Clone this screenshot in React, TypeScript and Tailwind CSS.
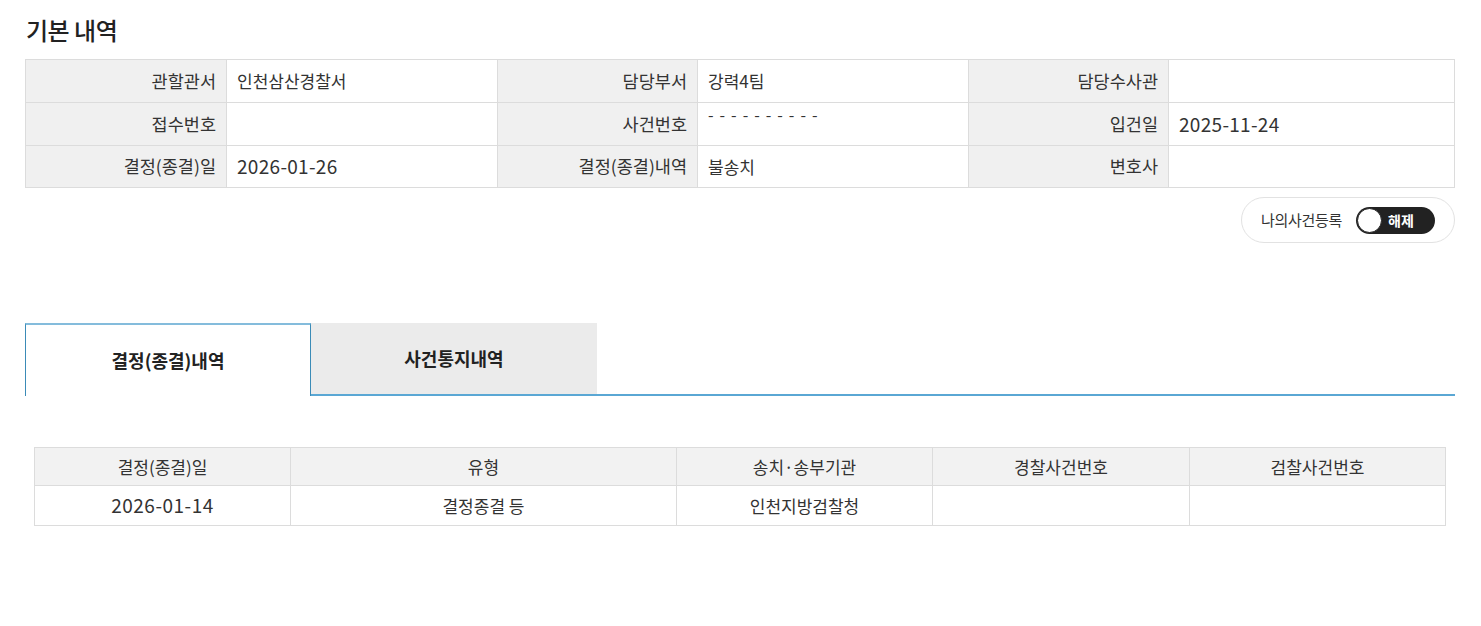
import { useState } from "react";

const font = { fontFamily: '"Noto Sans CJK KR", "Noto Sans", sans-serif' };

const basicRows = [
  [
    { label: "관할관서", value: "인천삼산경찰서" },
    { label: "담당부서", value: "강력4팀" },
    { label: "담당수사관", value: "" },
  ],
  [
    { label: "접수번호", value: "" },
    { label: "사건번호", value: "masked" },
    { label: "입건일", value: "2025-11-24" },
  ],
  [
    { label: "결정(종결)일", value: "2026-01-26" },
    { label: "결정(종결)내역", value: "불송치" },
    { label: "변호사", value: "" },
  ],
];

const decisionCols = ["결정(종결)일", "유형", "송치·송부기관", "경찰사건번호", "검찰사건번호"];
const decisionRows = [["2026-01-14", "결정종결 등", "인천지방검찰청", "", ""]];

// dates render a bit larger so digits are as wide as in the original font
const isDate = (v: string) => /^\d{4}-\d{2}-\d{2}$/.test(v);

const App = () => {
  const [tab, setTab] = useState(0);
  const [registered, setRegistered] = useState(true);

  return (
    <div className="min-h-screen bg-white text-[#222]" style={font}>
      <div className="px-[25px] pt-[13px] pr-[26px]">
        <h2 className="text-[24px] font-medium leading-[34px] tracking-[-0.5px] mb-[12px] ml-[1px]">기본 내역</h2>

        {/* 기본 내역 table */}
        <div className="border-t border-l border-[#dcdcdc]">
          {basicRows.map((row, i) => (
            <div key={i} className={`grid grid-cols-[201px_271px_200px_271px_200px_1fr] ${i === 2 ? "h-[42px]" : "h-[43px]"}`}>
              {row.map((cell) => (
                <>
                  <div
                    key={cell.label + "l"}
                    className="bg-[#f0f0f0] border-r border-b border-[#dcdcdc] flex items-center justify-end pr-[10px] text-[17.5px] text-[#333]"
                  >
                    {cell.label}
                  </div>
                  <div
                    key={cell.label + "v"}
                    className={`border-r border-b border-[#dcdcdc] flex items-center pl-[10px] text-[#333] ${
                      isDate(cell.value) ? "text-[19px] tracking-[0.3px]" : "text-[17px]"
                    }`}
                  >
                    {cell.value === "masked" ? (
                      <span className="self-start pt-[1px] text-[16px] tracking-[6px] leading-[20px]">----------</span>
                    ) : (
                      cell.value
                    )}
                  </div>
                </>
              ))}
            </div>
          ))}
        </div>

        {/* 나의사건등록 */}
        <div className="flex justify-end mt-[9px]">
          <div className="flex items-center gap-[14px] h-[46px] pl-[19px] pr-[19px] border border-[#e2e2e2] rounded-full">
            <span className="text-[15px] text-[#333] tracking-[-0.3px]">나의사건등록</span>
            <button
              onClick={() => setRegistered(!registered)}
              className="relative w-[79px] h-[27px] rounded-full bg-[#222] flex items-center"
            >
              <span className="absolute left-[1px] top-[1px] w-[25px] h-[25px] rounded-full bg-white border border-[#222]" />
              <span className="ml-[32px] text-white text-[14px] font-bold">{registered ? "해제" : "등록"}</span>
            </button>
          </div>
        </div>

        {/* tabs */}
        <div className="flex mt-[80px] h-[73px]">
          {["결정(종결)내역", "사건통지내역"].map((t, i) =>
            i === tab ? (
              <button
                key={t}
                onClick={() => setTab(i)}
                className="w-[286px] bg-white border-t-2 border-t-[#84bcdc] border-l border-r border-[#3b8bb7] flex items-center justify-center text-[18px] font-bold text-[#222]"
              >
                {t}
              </button>
            ) : (
              <button
                key={t}
                onClick={() => setTab(i)}
                className="w-[286px] bg-[#ebebeb] border-b-2 border-[#5aa7d4] flex items-center justify-center text-[18px] font-bold text-[#222]"
              >
                {t}
              </button>
            )
          )}
          <div className="flex-1 border-b-2 border-[#5aa7d4]" />
        </div>

        {/* decision table */}
        <div className="mt-[51px] mx-[9px] border-t border-l border-[#dcdcdc]">
          <div className="grid grid-cols-[256px_386px_256px_257px_1fr] h-[38px] bg-[#f2f2f2]">
            {decisionCols.map((c) => (
              <div key={c} className="border-r border-b border-[#dcdcdc] flex items-center justify-center text-[17px] text-[#333]">
                {c}
              </div>
            ))}
          </div>
          {decisionRows.map((r, i) => (
            <div key={i} className="grid grid-cols-[256px_386px_256px_257px_1fr] h-[40px]">
              {r.map((v, j) => (
                <div
                  key={j}
                  className={`border-r border-b border-[#dcdcdc] flex items-center justify-center text-[#333] ${
                    isDate(v) ? "text-[19px] tracking-[0.5px]" : "text-[17px]"
                  }`}
                >
                  {v}
                </div>
              ))}
            </div>
          ))}
        </div>
      </div>
    </div>
  );
};

export default App;
